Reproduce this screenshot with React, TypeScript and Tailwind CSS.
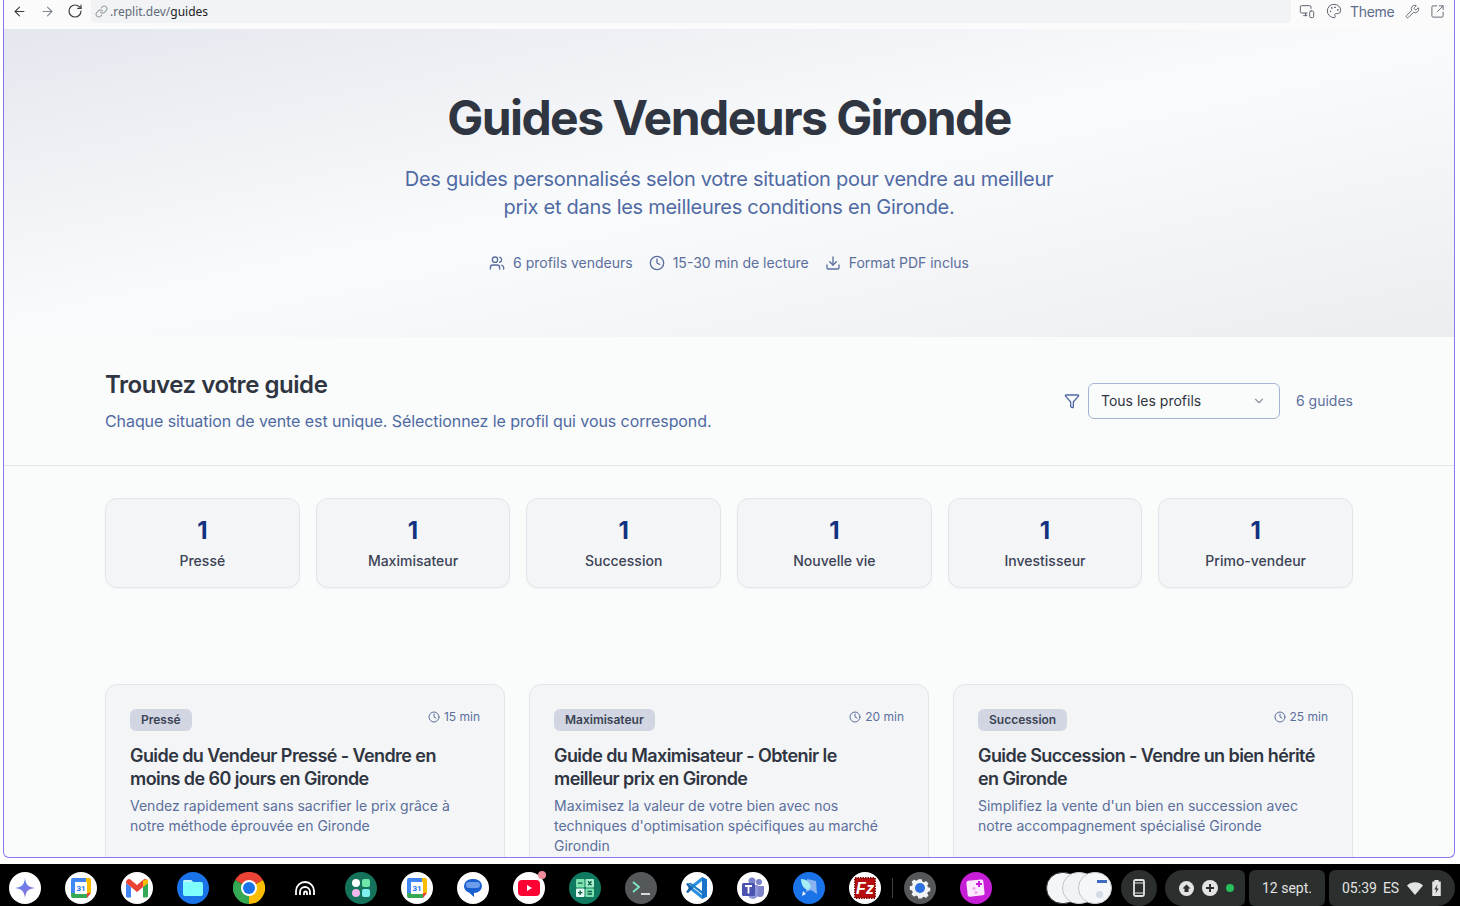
import { ArrowLeft, ArrowRight, ChevronDown, Clock, Download, Filter, Link, MonitorSmartphone, Palette, RotateCw, SquareArrowOutUpRight, Users, Wrench } from 'lucide-react';

const stats = ['Pressé', 'Maximisateur', 'Succession', 'Nouvelle vie', 'Investisseur', 'Primo-vendeur'];

const guides = [
  {
    tag: 'Pressé',
    time: '15 min',
    title: 'Guide du Vendeur Pressé - Vendre en moins de 60 jours en Gironde',
    text: 'Vendez rapidement sans sacrifier le prix grâce à notre méthode éprouvée en Gironde',
  },
  {
    tag: 'Maximisateur',
    time: '20 min',
    title: 'Guide du Maximisateur - Obtenir le meilleur prix en Gironde',
    text: "Maximisez la valeur de votre bien avec nos techniques d'optimisation spécifiques au marché Girondin",
  },
  {
    tag: 'Succession',
    time: '25 min',
    title: 'Guide Succession - Vendre un bien hérité en Gironde',
    text: "Simplifiez la vente d'un bien en succession avec notre accompagnement spécialisé Gironde",
  },
];

function Toolbar() {
  return (
    <div className="flex h-[29px] shrink-0 items-start bg-[#fbfbfc] text-[#5b6472]">
      <div className="flex h-[22px] w-[87px] shrink-0 items-center pl-[8px] text-[#3c4043]">
        <ArrowLeft size={15} strokeWidth={1.8} />
        <ArrowRight size={15} strokeWidth={1.8} className="ml-[13px] text-[#80868b]" />
        <RotateCw size={16} strokeWidth={1.8} className="ml-[12px]" />
      </div>
      <div className="flex h-[23px] w-[1200px] items-center gap-[2px] rounded-b-[4px] bg-[#f1f3f4] pl-[4px] text-[12px] text-[#5f6b7a]">
        <Link size={13} className="text-[#9aa0a6]" />
        <span className="font-['Noto_Sans',sans-serif]">.replit.dev/<span className="text-[#202124]">guides</span></span>
      </div>
      <div className="flex h-[22px] flex-1 items-center pl-[8px] text-[#5f6570]">
        <MonitorSmartphone size={16} strokeWidth={1.5} />
        <Palette size={16} strokeWidth={1.5} className="ml-[11px]" />
        <span className="ml-[8px] text-[14px] tracking-[-0.3px] text-[#5d6b8a]">Theme</span>
        <Wrench size={15} strokeWidth={1.5} className="ml-[11px]" />
        <SquareArrowOutUpRight size={15} strokeWidth={1.5} className="ml-[10px]" />
      </div>
    </div>
  );
}

function GuideCard({ guide }: { guide: (typeof guides)[number] }) {
  return (
    <div className="h-[260px] rounded-[12px] border border-[#e2e5ec] bg-[#f4f5f7] px-[24px] pt-[24px]">
      <div className="flex items-start justify-between">
        <span className="rounded-[6px] bg-[#d1d6e2] px-[11px] py-[2px] text-[12px] leading-[18px] font-semibold text-[#3b4354]">{guide.tag}</span>
        <span className="flex items-center gap-[4px] text-[12px] leading-[16px] text-[#5b6f9c]">
          <Clock size={12} />
          {guide.time}
        </span>
      </div>
      <h3 className="mt-[13px] text-[18px] leading-[23px] font-semibold tracking-[-0.58px] text-[#2f3541]">{guide.title}</h3>
      <p className="mt-[6px] text-[14px] leading-[20px] text-[#5b6f9c]">{guide.text}</p>
    </div>
  );
}

function CalendarIcon() {
  return (
    <svg width="22" height="22" viewBox="0 0 22 22">
      <rect x="1" y="1" width="20" height="20" rx="2" fill="#fff" />
      <path d="M3 1h13v4H5v11H1V3a2 2 0 0 1 2-2Z" fill="#4285f4" />
      <path d="M16 1h3a2 2 0 0 1 2 2v13h-4V5h-1Z" fill="#fbbc04" />
      <path d="M1 16h4v1h12v4H3a2 2 0 0 1-2-2Z" fill="#34a853" />
      <path d="M17 16h4l-4 5Z" fill="#ea4335" />
      <text x="11" y="14" textAnchor="middle" fontSize="8" fontWeight="700" fill="#1a73e8" fontFamily="Roboto">31</text>
    </svg>
  );
}

function Shelf() {
  const white = 'flex h-[32px] w-[32px] shrink-0 items-center justify-center overflow-hidden rounded-full bg-white';
  return (
    <div className="flex h-[42px] shrink-0 items-center bg-black pt-[6px] pr-[5px] pl-[9px] text-[#e3e3e3]">
      <div className="flex items-center gap-[24px]">
        <div className={white}>
          <svg width="22" height="22" viewBox="0 0 22 22">
            <defs>
              <linearGradient id="spark" x1="0" y1="0" x2="1" y2="1">
                <stop offset="0" stopColor="#4a8cf0" />
                <stop offset="1" stopColor="#a06ad8" />
              </linearGradient>
            </defs>
            <path d="M11 1 C12 8 14 10 21 11 C14 12 12 14 11 21 C10 14 8 12 1 11 C8 10 10 8 11 1Z" fill="url(#spark)" />
          </svg>
        </div>
        <div className={white}>
          <CalendarIcon />
        </div>
        <div className={white}>
          <svg width="24" height="20" viewBox="0 0 24 20">
            <path d="M1 5v13a1.500 1.500 0 0 0 1.500 1.500H6V9Z" fill="#4285f4" />
            <path d="M23 5v13a1.500 1.500 0 0 1-1.500 1.500H18V9Z" fill="#34a853" />
            <path d="M1 5C1 1.500 4 0 6 2l6 5 6-5c2-2 5-.5 5 3l-5 4-6 5-6-5Z" fill="#ea4335" />
            <path d="M18 2.500 23 1.500V5l-5 4Z" fill="#fbbc04" />
          </svg>
        </div>
        <div className="flex h-[32px] w-[32px] shrink-0 items-center justify-center rounded-full bg-[#1a73e8]">
          <svg width="22" height="18" viewBox="0 0 22 18">
            <path d="M1 3a2 2 0 0 1 2-2h6l2 2h8a2 2 0 0 1 2 2v10a2 2 0 0 1-2 2H3a2 2 0 0 1-2-2Z" fill="#7ffcfc" />
            <path d="M1 3a2 2 0 0 1 2-2h6l2 2Z" fill="#c3f4f8" />
          </svg>
        </div>
        <div className="flex h-[32px] w-[32px] shrink-0 items-center justify-center">
          <svg width="32" height="32" viewBox="0 0 32 32">
            <path d="M16 16 L2.100 8 A16 16 0 0 1 29.900 8 Z" fill="#ea4335" />
            <path d="M16 16 L29.900 8 A16 16 0 0 1 16 32 Z" fill="#fbbc04" />
            <path d="M16 16 L16 32 A16 16 0 0 1 2.100 8 Z" fill="#34a853" />
            <circle cx="16" cy="16" r="8" fill="#fff" />
            <circle cx="16" cy="16" r="6" fill="#1a73e8" />
          </svg>
        </div>
        <div className="flex h-[32px] w-[32px] shrink-0 items-center justify-center">
          <svg width="22" height="18" viewBox="0 0 22 18" fill="none" stroke="#fff" strokeWidth="1.800">
            <path d="M2 16V12a9 9 0 0 1 18 0v4" />
            <path d="M6 16v-3a5 5 0 0 1 10 0v3" />
            <path d="M10 16v-2a1.500 1.500 0 0 1 3 0v2" />
          </svg>
        </div>
        <div className="flex h-[32px] w-[32px] shrink-0 items-center justify-center rounded-full bg-[#14735a]">
          <svg width="20" height="20" viewBox="0 0 20 20">
            <circle cx="5" cy="5" r="4" fill="#fff" />
            <rect x="11" y="1" width="8" height="8" rx="2" fill="#6ee7a8" />
            <circle cx="5" cy="15" r="4" fill="#f0b8ec" />
            <rect x="11" y="11" width="8" height="8" rx="2" fill="#7ff0f0" />
          </svg>
        </div>
        <div className={white}>
          <CalendarIcon />
        </div>
        <div className={white}>
          <svg width="24" height="24" viewBox="0 0 24 24">
            <path d="M3 10a8 7 0 0 1 8-7h2a8 7 0 0 1 8 7 8 7 0 0 1-8 7v4l-5-4.500A8 7 0 0 1 3 10Z" fill="#1a5fd0" />
            <rect x="5" y="6" width="14" height="6" rx="3" fill="#6d9eee" />
          </svg>
        </div>
        <div className={`relative ${white} overflow-visible`}>
          <svg width="22" height="16" viewBox="0 0 22 16">
            <rect x="0" y="0" width="22" height="16" rx="4" fill="#ff0033" />
            <path d="M9 5l5 3-5 3Z" fill="#fff" />
          </svg>
          <span className="absolute -top-[1px] -right-[1px] h-[8px] w-[8px] rounded-full bg-[#f28b9b]" />
        </div>
        <div className="flex h-[32px] w-[32px] shrink-0 items-center justify-center rounded-full bg-[#0f7a5f]">
          <svg width="20" height="20" viewBox="0 0 20 20">
            <rect x="1" y="1" width="8.500" height="8.500" rx="1" fill="#7fe3b0" />
            <rect x="10.500" y="1" width="8.500" height="8.500" rx="1" fill="#a7f0cb" />
            <rect x="1" y="10.500" width="8.500" height="8.500" rx="1" fill="#e6fbf0" />
            <rect x="10.500" y="10.500" width="8.500" height="8.500" rx="1" fill="#7fe3b0" />
            <path d="M3 5.200h4.500M13 3.300l3.500 4M16.500 3.300l-3.500 4" stroke="#0b5e49" strokeWidth="1.300" />
            <path d="M5.200 12.500v4.500M3 14.700h4.500M12.500 13.500h4.500M12.500 16h4.500" stroke="#0b5e49" strokeWidth="1.300" />
          </svg>
        </div>
        <div className="flex h-[32px] w-[32px] shrink-0 items-center justify-center rounded-full bg-[#55585b]">
          <svg width="20" height="16" viewBox="0 0 20 16" fill="none">
            <path d="M2 2l6 5-6 5" stroke="#7fe8c0" strokeWidth="1.800" />
            <path d="M10 14h9" stroke="#e8eaed" strokeWidth="1.800" />
          </svg>
        </div>
        <div className={white}>
          <svg width="24" height="24" viewBox="0 0 24 24">
            <path d="M17 1l5 2.500v17L17 23 3 12Z" fill="#2a8fe0" />
            <path d="M17 1v22l5-2.500v-17Z" fill="#1a73c8" />
            <path d="M1 8l2-1 5 5-5 5-2-1 3-4Z" fill="#1560a8" />
            <path d="M8 12l9-7v14Z" fill="#fff" />
            <path d="M3 7l14 11v-3L6 7Z" fill="#1a7cc8" />
          </svg>
        </div>
        <div className={white}>
          <svg width="24" height="22" viewBox="0 0 24 22">
            <circle cx="18" cy="5" r="3" fill="#7b83c9" />
            <circle cx="11" cy="4" r="3.500" fill="#7b83c9" />
            <path d="M13 9h10v7a4 4 0 0 1-8 0Z" fill="#7b83c9" />
            <path d="M7 8h10v9a5 5 0 0 1-10 0Z" fill="#8f96d8" />
            <rect x="1" y="6" width="13" height="13" rx="1.500" fill="#4b53b0" />
            <path d="M4 9h7M7.500 9v7.500" stroke="#fff" strokeWidth="1.800" />
          </svg>
        </div>
        <div className="flex h-[32px] w-[32px] shrink-0 items-center justify-center rounded-full bg-[#1a73e8]">
          <svg width="24" height="24" viewBox="0 0 24 24">
            <path d="M10 3l9 2 1 13-6-4-5 2Z" fill="#8ab4f0" />
            <path d="M4 3c5 0 9 3 10 8l-3 3C7 13 4 9 4 3Z" fill="#a6ecf5" />
            <path d="M6 15l3 3-4 2Z" fill="#e8f4ff" />
          </svg>
        </div>
        <div className={white}>
          <svg width="22" height="22" viewBox="0 0 22 22">
            <rect x="1" y="1" width="20" height="20" fill="#b50d0d" stroke="#8f0a0a" strokeDasharray="1.500 1" strokeWidth="2" />
            <text x="11" y="17" textAnchor="middle" fontSize="16" fontStyle="italic" fontWeight="700" fill="#fff" fontFamily="Liberation Sans">Fz</text>
          </svg>
        </div>
      </div>
      <div className="mx-[11px] h-[20px] w-px bg-[#3c4043]" />
      <div className="flex items-center gap-[24px]">
        <div className="flex h-[32px] w-[32px] shrink-0 items-center justify-center rounded-full bg-[#55585b]">
          <svg width="24" height="24" viewBox="0 0 24 24">
            <path d="M10 2h4l.6 2.600 2 .8 2.300-1.400 2.800 2.800-1.400 2.300.8 2 2.600.6v4l-2.600.6-.8 2 1.400 2.300-2.800 2.800-2.300-1.400-2 .8L14 24h-4l-.6-2.600-2-.8-2.300 1.400-2.800-2.800 1.400-2.300-.8-2L.3 14v-4l2.600-.6.8-2L2.300 5l2.800-2.800L7.400 3.600l2-.8Z" fill="#f1f3f4" transform="translate(1.500 1.500) scale(.875)" />
            <circle cx="12" cy="12" r="5" fill="#2f6fdf" />
          </svg>
        </div>
        <div className="flex h-[32px] w-[32px] shrink-0 items-center justify-center rounded-full bg-[#c71ed8]">
          <svg width="20" height="20" viewBox="0 0 20 20">
            <rect x="1" y="2" width="17" height="16" rx="2" fill="#fbeafc" transform="rotate(-6 10 10)" />
            <path d="M13 3v6M10 6h6" stroke="#c71ed8" strokeWidth="2" />
            <path d="M8 9v3M6.500 10.500h3M10 13v3M8.500 14.500h3" stroke="#ef9cf4" strokeWidth="1.500" />
          </svg>
        </div>
      </div>
      {/* Right side: previews and status pills */}
      <div className="ml-auto flex items-center">
        <div className="flex items-center pr-[9px]">
          <div className="h-[32px] w-[34px] rounded-full border border-[#3a3a3a] bg-[#f4f5f6]" />
          <div className="-ml-[18px] h-[32px] w-[34px] rounded-full border border-[#c4c6ca] bg-[#f2f3f5]" />
          <div className="-ml-[18px] flex h-[32px] w-[34px] flex-col items-end overflow-hidden rounded-full border border-[#c4c6ca] bg-[#f4f6fa] pt-[7px] pr-[4px]">
            <div className="h-[3px] w-[10px] bg-[#3f6cc0]" />
            <div className="mt-[8px] mr-[4px] h-[7px] w-[7px] rounded-full bg-[#d5dce8]" />
          </div>
        </div>
        <div className="flex h-[36px] w-[36px] items-center justify-center rounded-full bg-[#2b2f2d]">
          <svg width="14" height="18" viewBox="0 0 14 18" fill="none" stroke="#e3e3e3" strokeWidth="1.800">
            <rect x="2" y="1" width="10" height="16" rx="1.500" />
            <path d="M2 4h10M2 14h10" strokeWidth="1.200" />
          </svg>
        </div>
        <div className="ml-[8px] flex h-[36px] w-[80px] items-center gap-[8px] rounded-l-[18px] rounded-r-[6px] bg-[#2b2f2d] pl-[14px]">
          <svg width="15" height="15" viewBox="0 0 15 15"><circle cx="7.500" cy="7.500" r="7.500" fill="#e3e3e3" /><path d="M7.500 3.500l4 4H9.500v3.500h-4V7.500h-2Z" fill="#2b2f2d" /></svg>
          <svg width="16" height="16" viewBox="0 0 16 16"><circle cx="8" cy="8" r="8" fill="#e3e3e3" /><path d="M8 4v8M4 8h8" stroke="#2b2f2d" strokeWidth="2" /></svg>
          <span className="h-[8px] w-[8px] rounded-full bg-[#28c05c]" />
        </div>
        <div className="ml-[4px] flex h-[36px] w-[76px] items-center justify-center rounded-[6px] bg-[#2b2f2d] font-['Roboto',sans-serif] text-[14px] text-[#e3e3e3]">12 sept.</div>
        <div className="ml-[4px] flex h-[36px] w-[126px] items-center rounded-l-[6px] rounded-r-[18px] bg-[#2b2f2d] pl-[13px] font-['Roboto',sans-serif] text-[14px] text-[#e3e3e3]">
          <span>05:39</span>
          <span className="ml-[6px]">ES</span>
          <svg className="ml-[8px]" width="16" height="13" viewBox="0 0 16 13"><path d="M0 3.500C4.500-.8 11.500-.8 16 3.500L8 13Z" fill="#e3e3e3" /></svg>
          <svg className="ml-[8px]" width="11" height="16" viewBox="0 0 10 15"><path d="M3 0h4v1.500h2V15H1V1.500h2Z" fill="#e3e3e3" /><path d="M6 4L3 9h2l-1 4 3-5H5Z" fill="#2b2f2d" /></svg>
        </div>
      </div>
    </div>
  );
}

export default function App() {
  return (
    <div className="flex h-[906px] w-[1460px] flex-col overflow-hidden bg-white font-['Inter',sans-serif]">
      <div className="ml-[3px] h-[858px] w-[1452px] shrink-0 overflow-hidden rounded-b-[6px] border-x border-b border-[#8678f0] bg-[#fafbfb]">
        <Toolbar />
        {/* Hero */}
        <section className="flex h-[308px] flex-col items-center bg-gradient-to-br from-[#e4e7ee] via-[#fafbfc] to-[#ebedf1] pt-[59px]">
          <h1 className="text-[48px] leading-[60px] font-bold tracking-[-1.56px] text-[#2f3541]">Guides Vendeurs Gironde</h1>
          <p className="mt-[17px] w-[672px] text-center text-[20px] leading-[28px] tracking-[-0.28px] text-[#4f6aa3]">
            Des guides personnalisés selon votre situation pour vendre au meilleur prix et dans les meilleures conditions en Gironde.
          </p>
          <div className="mt-[32px] flex items-center gap-[16px] text-[14px] leading-[20px] text-[#5b6f9c]">
            <span className="flex items-center gap-[8px]"><Users size={16} />6 profils vendeurs</span>
            <span className="flex items-center gap-[8px]"><Clock size={16} />15-30 min de lecture</span>
            <span className="flex items-center gap-[8px]"><Download size={16} />Format PDF inclus</span>
          </div>
        </section>
        {/* Filter */}
        <section className="border-b border-[#e2e5ec]">
          <div className="mx-auto flex h-[128px] w-[1248px] items-center justify-between">
            <div>
              <h2 className="text-[24px] leading-[32px] font-semibold tracking-[-0.45px] text-[#2f3541]">Trouvez votre guide</h2>
              <p className="mt-[8px] text-[16px] leading-[24px] tracking-[-0.08px] text-[#4f6aa3]">Chaque situation de vente est unique. Sélectionnez le profil qui vous correspond.</p>
            </div>
            <div className="flex items-center">
              <Filter size={16} className="text-[#4f6aa3]" />
              <button className="ml-[8px] flex h-[36px] w-[192px] items-center justify-between rounded-[6px] border border-[#a3b4d4] pr-[13px] pb-[1px] pl-[12px] text-[14px] text-[#2f3541]">
                Tous les profils
                <ChevronDown size={14} className="text-[#8b93a1]" />
              </button>
              <span className="ml-[16px] pb-[1px] text-[14px] text-[#5b6f9c]">6 guides</span>
            </div>
          </div>
        </section>
        {/* Stats */}
        <div className="mx-auto mt-[32px] grid w-[1248px] grid-cols-6 gap-[16px]">
          {stats.map((s) => (
            <div key={s} className="flex h-[90px] flex-col items-center rounded-[12px] border border-[#e2e5ec] bg-[#f4f5f7] pt-[16px] shadow-[0_1px_2px_rgba(0,0,0,0.04)]">
              <span className="text-[24px] leading-[32px] font-bold text-[#12327f]">1</span>
              <span className="mt-[4px] text-[14px] leading-[20px] font-medium text-[#3b4354]">{s}</span>
            </div>
          ))}
        </div>
        {/* Guides */}
        <div className="mx-auto mt-[96px] grid w-[1248px] grid-cols-3 gap-[24px]">
          {guides.map((g) => (
            <GuideCard key={g.tag} guide={g} />
          ))}
        </div>
      </div>
      <div className="h-[6px] shrink-0" />
      <Shelf />
    </div>
  );
}
